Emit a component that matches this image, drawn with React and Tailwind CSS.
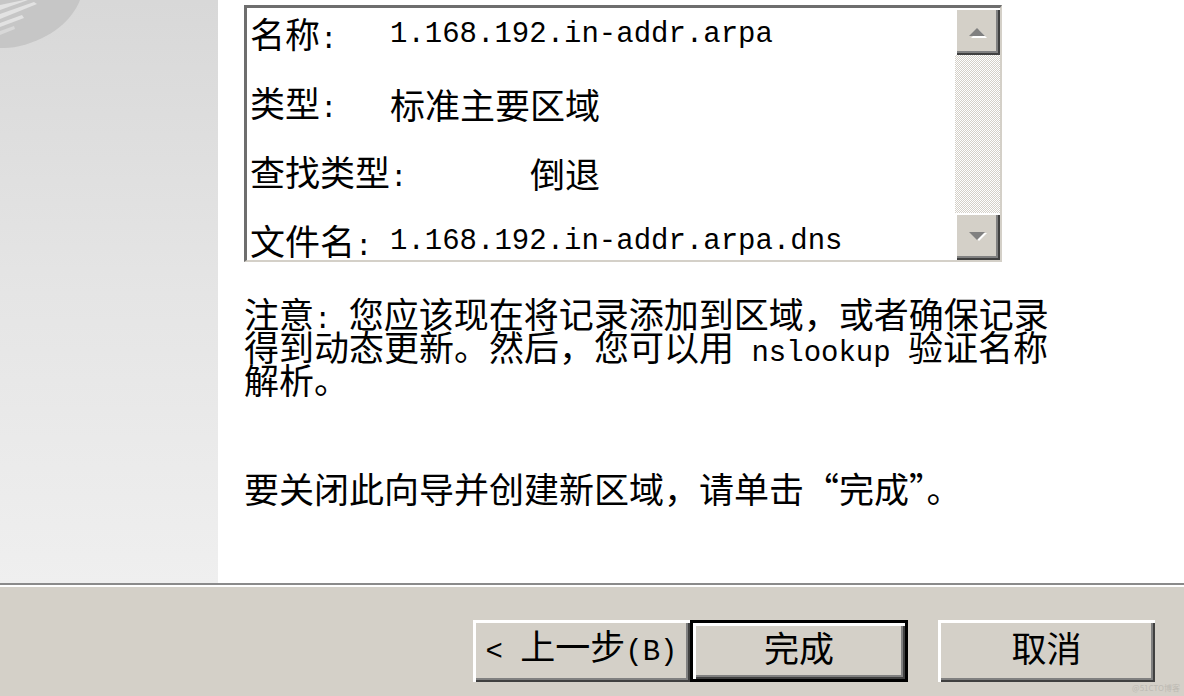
import React from "react";

const mono = "font-['Liberation_Mono','Courier_New',monospace] text-[29px]";

const rows = [
  { label: "名称", value: "1.168.192.in-addr.arpa", ascii: true, w: "w-[140px]" },
  { label: "类型", value: "标准主要区域", ascii: false, w: "w-[140px]" },
  { label: "查找类型", value: "倒退", ascii: false, w: "w-[280px]" },
  { label: "文件名", value: "1.168.192.in-addr.arpa.dns", ascii: true, w: "w-[140px]" }
];

const Arrow = ({ down }) => (
  <svg width="24" height="14" viewBox="0 0 24 14">
    {down ? (
      <>
        <path d="M5 3 L21 3 L13 11 Z" fill="#ffffff" />
        <path d="M3 2 L19 2 L11 10 Z" fill="#808080" />
      </>
    ) : (
      <>
        <path d="M5 13 L13 5 L21 13 Z" fill="#ffffff" />
        <path d="M3 11 L11 3 L19 11 Z" fill="#808080" />
      </>
    )}
  </svg>
);

const ScrollButton = ({ down }) => (
  <div className="h-[47px] flex items-center justify-center bg-[#d4d0c8] shadow-[inset_2px_2px_0_#ffffff,inset_-2px_-2px_0_#404040,inset_-4px_-4px_0_#808080]">
    <Arrow down={down} />
  </div>
);

const WinButton = ({ children, isDefault }) => (
  <button
    type="button"
    className={`h-[62px] pb-[9px] flex items-center justify-center bg-[#d4d0c8] text-[35px] leading-none text-black shadow-[inset_3px_3px_0_#ffffff,inset_-2px_-2px_0_#404040,inset_-4px_-4px_0_#808080] ${
      isDefault ? "border-[3px] border-black w-[218px]" : "w-[217px]"
    }`}
  >
    <span className="whitespace-pre">{children}</span>
  </button>
);

export default function App() {
  return (
    <div className="relative w-[1184px] h-[696px] flex flex-col bg-white text-black font-['Noto_Sans_CJK_SC','Noto_Sans',sans-serif] overflow-hidden">
      {/* upper wizard page */}
      <div className="flex h-[583px]">
        <div className="relative w-[218px] bg-linear-to-b from-[#d8d8d8] via-[#e5e5e5] to-[#efefef]">
          <svg className="absolute left-0 top-0" width="90" height="60" viewBox="0 0 90 60">
            <path d="M0 0 L80 0 C72 20 52 38 20 46 C12 48 5 48 0 48 Z" fill="#c6c6c6" />
            <path d="M0 5 L24 0 L28 0 L0 10 Z" fill="#e2e2e2" />
            <path d="M0 14 L34 2 L37 4 L0 19 Z" fill="#e2e2e2" />
            <path d="M0 23 L22 15 L24 18 L0 27 Z" fill="#e2e2e2" />
            <path d="M0 31 L14 26 L15 29 L0 35 Z" fill="#d8d8d8" />
          </svg>
        </div>

        <div className="flex-1 pl-[26px] pt-[5px]">
          {/* listbox */}
          <div className="w-[758px] h-[257px] flex border-t-[3px] border-l-[3px] border-[#6e6e6e] border-b-2 border-r-2 border-b-[#d4d0c8] border-r-[#d4d0c8]">
            <div className="flex-1 pl-[3px]">
              <div className="-mt-[8px] flex flex-col">
                {rows.map((r) => (
                  <div key={r.label} className="h-[69px] flex items-center text-[35px] leading-none whitespace-nowrap">
                    <span className={`${r.w} shrink-0`}>
                      {r.label}
                      <span className={mono}>:</span>
                    </span>
                    <span className={r.ascii ? mono : ""}>{r.value}</span>
                  </div>
                ))}
              </div>
            </div>
            <div className="w-[45px] flex flex-col">
              <ScrollButton />
              <div className="flex-1 bg-[repeating-conic-gradient(#d4d0c8_0%_25%,#ffffff_0%_50%)] bg-[length:2px_2px]" />
              <ScrollButton down />
            </div>
          </div>

          {/* note text */}
          <div className="mt-[34px] text-[35px] whitespace-nowrap">
            <div className="h-[33px] leading-[33px]">
              注意<span className={`${mono} whitespace-pre`}>: </span>您应该现在将记录添加到区域，或者确保记录
            </div>
            <div className="h-[33px] leading-[33px]">
              得到动态更新。然后，您可以用<span className={`${mono} whitespace-pre`}> nslookup </span>验证名称
            </div>
            <div className="h-[33px] leading-[33px]">解析。</div>
          </div>

          <div className="mt-[76px] h-[33px] text-[35px] leading-[33px] whitespace-nowrap">
            要关闭此向导并创建新区域，请单击“完成”。
          </div>
        </div>
      </div>

      {/* separator */}
      <div className="h-[2px] bg-[#8a8a8a]" />
      <div className="h-[2px] bg-white" />

      {/* button bar */}
      <div className="flex-1 bg-[#d4d0c8] flex justify-end items-start pt-[33px] pr-[29px]">
        <WinButton>
          <span className={mono}>{"< "}</span>上一步<span className={mono}>(B)</span>
        </WinButton>
        <WinButton isDefault>完成</WinButton>
        <div className="w-[30px]" />
        <WinButton>取消</WinButton>
      </div>

      <div className="absolute right-[4px] bottom-[2px] text-[8px] text-[#bdbab3]">@51CTO博客</div>
    </div>
  );
}
